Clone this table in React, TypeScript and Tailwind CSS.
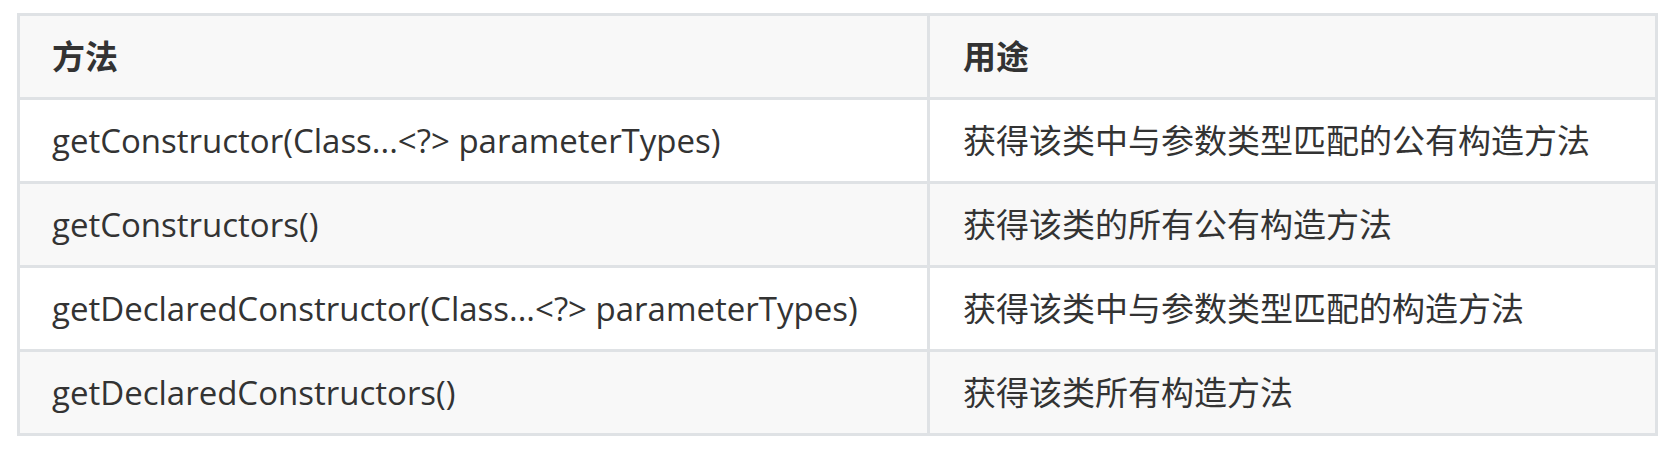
const rows = [
  ["getConstructor(Class...<?> parameterTypes)", "获得该类中与参数类型匹配的公有构造方法"],
  ["getConstructors()", "获得该类的所有公有构造方法"],
  ["getDeclaredConstructor(Class...<?> parameterTypes)", "获得该类中与参数类型匹配的构造方法"],
  ["getDeclaredConstructors()", "获得该类所有构造方法"],
];

const font = "font-['Open_Sans','Noto_Sans_CJK_SC',sans-serif]";

export default function App() {
  return (
    <div className={`min-h-[452px] bg-white pl-[17px] pt-[13px] text-[#333333] ${font}`}>
      <div className="w-[1641px] border-[3px] border-[#dfe2e5] text-[33px]">
        <div className="flex h-[81px] bg-[#f8f8f8] font-bold">
          <div className="flex w-[910px] items-center border-r-[3px] border-[#dfe2e5] pl-[32px]">方法</div>
          <div className="flex flex-1 items-center pl-[33px]">用途</div>
        </div>
        {rows.map(([method, use], i) => (
          <div
            key={method}
            className={`flex h-[84px] border-t-[3px] border-[#dfe2e5] ${
              i % 2 === 1 ? "bg-[#f8f8f8]" : "bg-white"
            }`}
          >
            <div className="flex w-[910px] items-center border-r-[3px] border-[#dfe2e5] pl-[32px]">{method}</div>
            <div className="flex flex-1 items-center pl-[33px]">{use}</div>
          </div>
        ))}
      </div>
    </div>
  );
}
